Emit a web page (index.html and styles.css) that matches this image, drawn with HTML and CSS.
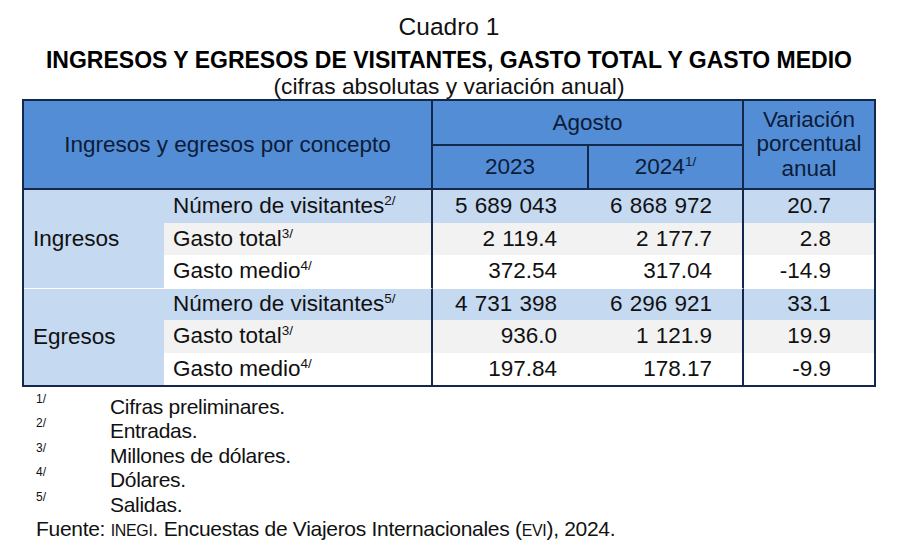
FILE: index.html
```html
<!DOCTYPE html>
<html lang="es">
<head>
<meta charset="utf-8">
<title>Cuadro 1</title>
<link rel="stylesheet" href="styles.css">
</head>
<body>
<div class="page">
  <h1 class="cap-num">Cuadro 1</h1>
  <h2 class="cap-title">INGRESOS Y EGRESOS DE VISITANTES, GASTO TOTAL Y GASTO MEDIO</h2>
  <p class="cap-sub">(cifras absolutas y variación anual)</p>
  <table class="data">
    <colgroup>
      <col class="c-group">
      <col class="c-concept">
      <col class="c-y1">
      <col class="c-y2">
      <col class="c-var">
    </colgroup>
    <thead>
      <tr>
        <th class="h-concept" colspan="2" rowspan="2">Ingresos y egresos por concepto</th>
        <th class="h-agosto" colspan="2">Agosto</th>
        <th class="h-var" rowspan="2">Variación<br>porcentual<br>anual</th>
      </tr>
      <tr>
        <th class="h-year h-y1">2023</th>
        <th class="h-year h-y2">2024<sup>1/</sup></th>
      </tr>
    </thead>
    <tbody>
      <tr class="r-blue">
        <td class="grp" rowspan="3">Ingresos</td>
        <td class="lbl">Número de visitantes<sup>2/</sup></td>
        <td class="num n1">5 689 043</td>
        <td class="num n2">6 868 972</td>
        <td class="num nv">20.7</td>
      </tr>
      <tr class="r-gray">
        <td class="lbl">Gasto total<sup>3/</sup></td>
        <td class="num n1">2 119.4</td>
        <td class="num n2">2 177.7</td>
        <td class="num nv">2.8</td>
      </tr>
      <tr class="r-white">
        <td class="lbl">Gasto medio<sup>4/</sup></td>
        <td class="num n1">372.54</td>
        <td class="num n2">317.04</td>
        <td class="num nv">-14.9</td>
      </tr>
      <tr class="r-blue r-sep">
        <td class="grp" rowspan="3">Egresos</td>
        <td class="lbl">Número de visitantes<sup>5/</sup></td>
        <td class="num n1">4 731 398</td>
        <td class="num n2">6 296 921</td>
        <td class="num nv">33.1</td>
      </tr>
      <tr class="r-gray">
        <td class="lbl">Gasto total<sup>3/</sup></td>
        <td class="num n1">936.0</td>
        <td class="num n2">1 121.9</td>
        <td class="num nv">19.9</td>
      </tr>
      <tr class="r-white">
        <td class="lbl">Gasto medio<sup>4/</sup></td>
        <td class="num n1">197.84</td>
        <td class="num n2">178.17</td>
        <td class="num nv">-9.9</td>
      </tr>
    </tbody>
  </table>
  <ul class="notes">
    <li class="note"><span class="mk">1/</span><span>Cifras preliminares.</span></li>
    <li class="note"><span class="mk">2/</span><span>Entradas.</span></li>
    <li class="note"><span class="mk">3/</span><span>Millones de dólares.</span></li>
    <li class="note"><span class="mk">4/</span><span>Dólares.</span></li>
    <li class="note"><span class="mk">5/</span><span>Salidas.</span></li>
    <li class="source">Fuente: <span class="sc">INEGI</span>. Encuestas de Viajeros Internacionales (<span class="sc">EVI</span>), 2024.</li>
  </ul>
</div>
</body>
</html>
```

FILE: styles.css
```css
* {
  box-sizing: border-box;
}

body {
  margin: 0;
  background: #ffffff;
  color: #111111;
  font-family: "Liberation Sans", Arial, sans-serif;
}

.page {
  width: 900px;
  padding: 14px 24px 0 22px;
}

.cap-num {
  margin: 0;
  text-align: center;
  font-size: 24.5px;
  font-weight: normal;
  line-height: 26px;
}

.cap-title {
  margin: 7px 0 0;
  text-align: center;
  font-size: 23px;
  font-weight: bold;
  line-height: 26px;
  color: #000000;
}

.cap-sub {
  margin: 0;
  text-align: center;
  font-size: 22.8px;
  line-height: 26px;
}

.data {
  width: 854px;
  table-layout: fixed;
  border-collapse: separate;
  border-spacing: 0;
  border: 2px solid #14284b;
  font-size: 22.5px;
}

.c-group { width: 140px; }
.c-concept { width: 269px; }
.c-y1 { width: 156px; }
.c-y2 { width: 155px; }
.c-var { width: 130px; }

.data th {
  padding: 0;
  background: #538dd5;
  color: #0c1c38;
  font-weight: normal;
  text-align: center;
  border-color: #14284b;
}

.h-concept {
  border-right: 2px solid;
  border-bottom: 2px solid;
}

.h-agosto {
  height: 45px;
  border-right: 2px solid;
  border-bottom: 2px solid;
}

.h-var {
  border-bottom: 2px solid;
  line-height: 24.5px;
}

.h-year {
  height: 44px;
  border-right: 2px solid;
  border-bottom: 2px solid;
}

.data sup {
  font-size: 0.6em;
  line-height: 0;
  vertical-align: 0.6em;
}

.data td {
  height: 32.5px;
  padding: 0;
  line-height: 24px;
  white-space: nowrap;
}

.r-blue td { background: #c5d9f1; }
.r-gray td { background: #f2f2f2; }
.r-white td { background: #ffffff; }

.data td.grp {
  background: #c5d9f1;
  padding-left: 9px;
}

.r-sep td {
  border-top: 1px solid #ffffff;
}

.lbl {
  padding-left: 9px !important;
  border-right: 2px solid #14284b;
}

.num {
  text-align: right;
  word-spacing: 1px;
}

.n1 { padding-right: 32px !important; }

.n2 {
  padding-right: 30px !important;
  border-right: 2px solid #14284b;
}

.nv { padding-right: 43px !important; }

.notes {
  margin: 0;
  padding: 8px 0 0 14px;
  list-style: none;
  font-size: 21px;
  letter-spacing: -0.3px;
  line-height: 24.4px;
  color: #111111;
}

.note {
  display: grid;
  grid-template-columns: 74px auto;
}

.mk {
  font-size: 12px;
  letter-spacing: 0;
  line-height: 12px;
  margin-top: -2px;
}

.sc {
  font-size: 0.76em;
}
```
